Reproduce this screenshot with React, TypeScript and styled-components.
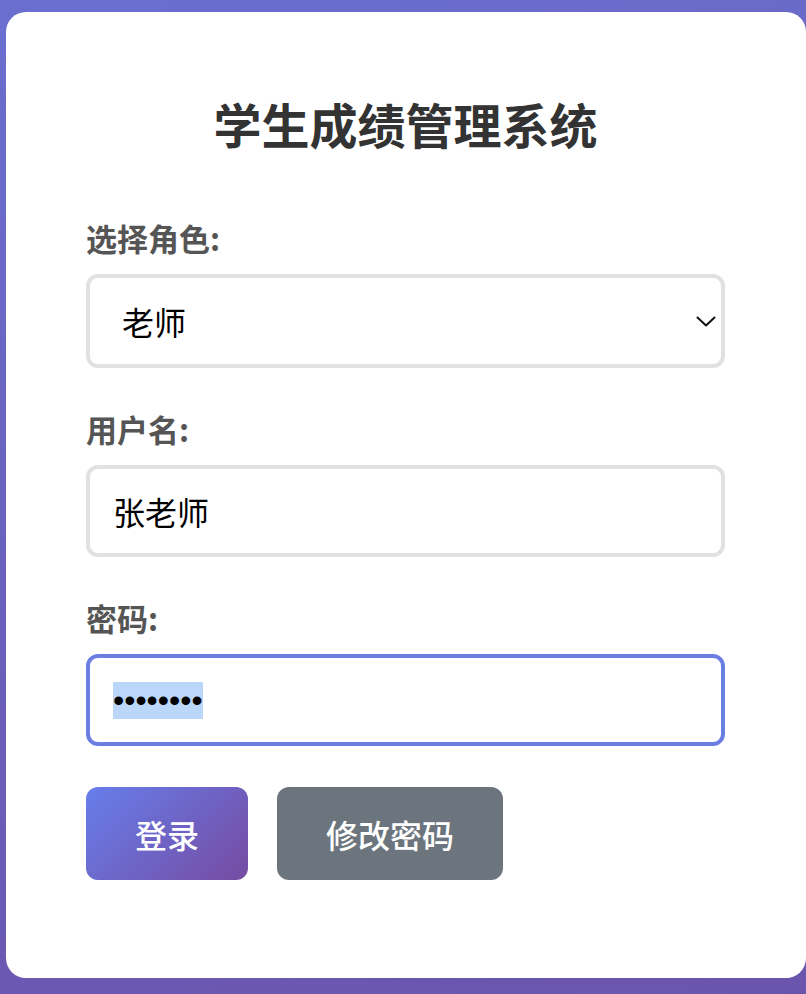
import React, { useEffect, useRef, useState } from 'react';
import styled, { createGlobalStyle } from 'styled-components';

const GlobalStyle = createGlobalStyle`
    html, body {
        margin: 0;
        padding: 0;
    }
    body {
        font-family: "Noto Sans CJK SC", "Noto Sans", "Liberation Sans", sans-serif;
        background: linear-gradient(165deg, #6a6fcf 0%, #6a60bd 50%, #6b54ac 100%);
        min-height: 994px;
    }
`;

const Page = styled.div`
    min-height: 994px;
    box-sizing: border-box;
    padding: 12px 0 16px 6px;
`;

const Card = styled.div`
    width: 800px;
    height: 966px;
    box-sizing: border-box;
    background: #ffffff;
    border-radius: 20px;
    padding: 78px 81px 0 80px;
`;

const Title = styled.h1`
    margin: 0 0 62px;
    text-align: center;
    font-size: 48px;
    line-height: 66px;
    font-weight: 700;
    color: #333333;
`;

const FormGroup = styled.div`
    margin-bottom: 41px;
`;

const Label = styled.label`
    display: block;
    font-size: 31px;
    line-height: 40px;
    font-weight: 700;
    color: #555555;
    margin-bottom: 16px;
`;

const fieldBase = `
    display: block;
    width: 100%;
    box-sizing: border-box;
    border: 4px solid #e1e1e1;
    border-radius: 12px;
    background: #ffffff;
    font-family: "Noto Sans CJK SC", "Noto Sans", "Liberation Sans", sans-serif;
    font-size: 32px;
    color: #000000;
    outline: none;
`;

const SelectWrap = styled.div`
    position: relative;
`;

const Select = styled.select`
    ${fieldBase}
    height: 94px;
    padding: 0 60px 0 32px;
    appearance: none;
    -webkit-appearance: none;
`;

const Chevron = styled.svg`
    position: absolute;
    right: 9px;
    top: 42px;
    width: 20px;
    height: 11px;
    pointer-events: none;
`;

const Input = styled.input<{ $focused?: boolean }>`
    ${fieldBase}
    height: 92px;
    padding: 0 23px;
    border-color: ${(p) => (p.$focused ? '#6b7fe2' : '#e1e1e1')};

    &[type='password'] {
        font-family: "Liberation Sans", "DejaVu Sans", sans-serif;
        font-size: 32px;
    }

    &::selection {
        background: #bad6f8;
        color: #000000;
    }
`;

const Buttons = styled.div`
    display: flex;
    align-items: center;
    gap: 29px;
`;

const Button = styled.button<{ $variant: 'primary' | 'secondary' }>`
    height: 93px;
    padding: 0 49px;
    border: none;
    border-radius: 12px;
    font-family: "Noto Sans CJK SC", "Noto Sans", "Liberation Sans", sans-serif;
    font-size: 32px;
    font-weight: 500;
    color: #ffffff;
    cursor: pointer;
    background: ${(p) =>
        p.$variant === 'primary'
            ? 'linear-gradient(135deg, #667eea 0%, #764ba2 100%)'
            : '#6c757d'};
`;

export default function App() {
    const [role, setRole] = useState('teacher');
    const [username, setUsername] = useState('张老师');
    const [password, setPassword] = useState('12345678');
    const pwdRef = useRef<HTMLInputElement>(null);

    // the reference shows the password field focused with its text selected
    useEffect(() => {
        const el = pwdRef.current;
        if (el) {
            el.focus();
            el.select();
        }
    }, []);

    return (
        <>
            <GlobalStyle />
            <Page>
                <Card>
                    <Title>学生成绩管理系统</Title>

                    <FormGroup>
                        <Label htmlFor="role">选择角色:</Label>
                        <SelectWrap>
                            <Select id="role" value={role} onChange={(e) => setRole(e.target.value)}>
                                <option value="student">学生</option>
                                <option value="teacher">老师</option>
                                <option value="admin">管理员</option>
                            </Select>
                            <Chevron viewBox="0 0 20 11" fill="none">
                                <path d="M1.5 1.5 L10 9.5 L18.5 1.5" stroke="#111" strokeWidth="2" strokeLinecap="round" strokeLinejoin="round" />
                            </Chevron>
                        </SelectWrap>
                    </FormGroup>

                    <FormGroup>
                        <Label htmlFor="username">用户名:</Label>
                        <Input id="username" value={username} onChange={(e) => setUsername(e.target.value)} />
                    </FormGroup>

                    <FormGroup>
                        <Label htmlFor="password">密码:</Label>
                        <Input
                            id="password"
                            type="password"
                            ref={pwdRef}
                            $focused
                            value={password}
                            onChange={(e) => setPassword(e.target.value)}
                        />
                    </FormGroup>

                    <Buttons>
                        <Button $variant="primary">登录</Button>
                        <Button $variant="secondary">修改密码</Button>
                    </Buttons>
                </Card>
            </Page>
        </>
    );
}
